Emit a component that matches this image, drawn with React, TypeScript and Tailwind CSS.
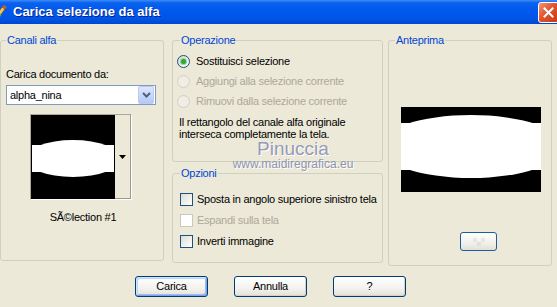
import type { ReactNode } from 'react';

const groupCls = 'border border-[#D0D0BF] rounded-[3px] min-w-0';
const legendCls = 'px-[1px] text-[#0046D5] leading-[13px]';

function Radio({ label, checked, disabled }: { label: string; checked?: boolean; disabled?: boolean }) {
    return (
        <div className="flex items-center h-[20px] gap-[6px]">
            <span
                className={
                    disabled
                        ? 'w-[13px] h-[13px] rounded-full border border-[#D2D0C4] bg-[#F0EEE4]'
                        : 'w-[13px] h-[13px] rounded-full border border-[#1C5180] bg-[linear-gradient(135deg,#D6D4CC,#FFFFFF)] flex items-center justify-center'
                }
            >
                {checked && <span className="w-[5px] h-[5px] rounded-full bg-[#2FA83A] shadow-[0_0_0_1px_#8CD88F]" />}
            </span>
            <span className={disabled ? 'text-[#ACA899]' : 'text-black'}>{label}</span>
        </div>
    );
}

function Check({ label, disabled }: { label: string; disabled?: boolean }) {
    return (
        <div className="flex items-center h-[21px] gap-[4px]">
            <span
                className={
                    disabled
                        ? 'w-[13px] h-[13px] border border-[#CAC8BB] bg-white'
                        : 'w-[13px] h-[13px] border border-[#1C5180] bg-[linear-gradient(135deg,#DCDCD7,#FFFFFF)]'
                }
            />
            <span className={disabled ? 'text-[#ACA899]' : 'text-black'}>{label}</span>
        </div>
    );
}

function XpButton({ children, isDefault }: { children: ReactNode; isDefault?: boolean }) {
    return (
        <button
            className={
                'w-[73px] h-[21px] rounded-[3px] border border-[#003C74] bg-[linear-gradient(to_bottom,#FFFFFF,#F3F2EE_60%,#E3E0D6)] text-black leading-none ' +
                (isDefault
                    ? 'shadow-[inset_1px_1px_0_#CEE7FF,inset_-1px_-1px_0_#7FA3E6,inset_2px_2px_0_#BCD4F6,inset_-2px_-2px_0_#9DBBF0]'
                    : 'shadow-[inset_-1px_-1px_0_#D6D0C5]')
            }
        >
            {children}
        </button>
    );
}

export default function App() {
    return (
        <div className="relative w-[557px] h-[307px] overflow-hidden bg-[#ECE9D8] font-['Liberation_Sans',Arial,sans-serif] text-[11px] tracking-[-0.25px] text-black">
            {/* title bar */}
            <div className="h-[24px] flex items-center bg-[linear-gradient(to_bottom,#3D8DF9_0%,#0A62EE_12%,#0058EE_45%,#0055E6_80%,#0045CC_100%)]">
                <svg width="16" height="16" viewBox="0 0 16 16" className="-ml-[7px]">
                    <path d="M2 13 L9 3 L12 5 L5 15 Z" fill="#E8C46A" stroke="#7A4A12" strokeWidth="0.8" />
                    <path d="M9 3 L11 1 L14 3 L12 5 Z" fill="#D05A2A" />
                    <circle cx="6" cy="11" r="2" fill="#4CAF50" />
                    <circle cx="4" cy="6" r="1.6" fill="#F4F4F4" />
                </svg>
                <span className="ml-[4px] text-white font-bold text-[13px] tracking-normal [text-shadow:1px_1px_0_#0A1E8C]">
                    Carica selezione da alfa
                </span>
                <div className="ml-auto mt-[1px] -mr-[2px] w-[21px] h-[21px] rounded-[3px] border border-white bg-[linear-gradient(135deg,#F0967A,#E2552E_45%,#C8380F)] flex items-center justify-center">
                    <svg width="11" height="11" viewBox="0 0 11 11">
                        <path d="M1.5 1.5 L9.5 9.5 M9.5 1.5 L1.5 9.5" stroke="white" strokeWidth="2" strokeLinecap="square" />
                    </svg>
                </div>
            </div>

            <div className="pt-[10px]">
                <div className="flex items-start h-[232px]">
                    {/* Canali alfa */}
                    <fieldset className={groupCls + ' w-[164px] h-[227px]'}>
                        <legend className={legendCls + ' ml-[5px]'}>Canali alfa</legend>
                        <div className="px-[5px] pt-[21px]">
                            <div className="leading-[13px]">Carica documento da:</div>
                            <div className="mt-[4px] w-[150px] h-[20px] border border-[#7F9DB9] bg-white flex items-center">
                                <span className="pl-[3px] flex-1">alpha_nina</span>
                                <span className="w-[16px] h-[18px] mr-[1px] rounded-[2px] border border-[#B9CBF3] bg-[linear-gradient(to_bottom,#DCE6FD,#B6C9F5)] flex items-center justify-center">
                                    <svg width="9" height="6" viewBox="0 0 9 6">
                                        <path d="M1 1 L4.5 4.5 L8 1" stroke="#4D6185" strokeWidth="2" fill="none" />
                                    </svg>
                                </span>
                            </div>
                            <div className="mt-[9px] ml-[24px] w-[102px] h-[86px] flex border border-t-[#ACA899] border-l-[#ACA899] border-r-white border-b-white">
                                <div className="border border-black">
                                    <svg width="82" height="82" viewBox="0 0 82 82" className="block">
                                        <rect width="82" height="82" fill="#000" />
                                        <rect y="29" width="82" height="27" fill="#fff" />
                                        <ellipse cx="41" cy="42.5" rx="48" ry="18.5" fill="#fff" />
                                    </svg>
                                </div>
                                <div className="flex-1 border-r border-b border-[#9C9A8C] bg-[#ECE9D8] flex items-center justify-center">
                                    <svg width="7" height="4" viewBox="0 0 7 4">
                                        <path d="M0 0 H7 L3.5 4 Z" fill="#000" />
                                    </svg>
                                </div>
                            </div>
                            <div className="mt-[11px] text-center leading-[13px] pl-[2px]">SÃ©lection #1</div>
                        </div>
                    </fieldset>

                    {/* middle column */}
                    <div className="ml-[8px] w-[211px] flex flex-col">
                        <fieldset className={groupCls + ' h-[128px]'}>
                            <legend className={legendCls + ' ml-[7px]'}>Operazione</legend>
                            <div className="pl-[4px] pt-[4px]">
                                <Radio label="Sostituisci selezione" checked />
                                <Radio label="Aggiungi alla selezione corrente" disabled />
                                <Radio label="Rimuovi dalla selezione corrente" disabled />
                                <p className="mt-[5px] ml-[2px] leading-[12px]">
                                    Il rettangolo del canale alfa originale
                                    <br />
                                    interseca completamente la tela.
                                </p>
                            </div>
                        </fieldset>
                        <fieldset className={groupCls + ' mt-[5px] h-[96px]'}>
                            <legend className={legendCls + ' ml-[7px]'}>Opzioni</legend>
                            <div className="pl-[7px] pt-[9px]">
                                <Check label="Sposta in angolo superiore sinistro tela" />
                                <Check label="Espandi sulla tela" disabled />
                                <Check label="Inverti immagine" />
                            </div>
                        </fieldset>
                    </div>

                    {/* Anteprima */}
                    <fieldset className={groupCls + ' ml-[5px] w-[164px] h-[232px]'}>
                        <legend className={legendCls + ' ml-[6px]'}>Anteprima</legend>
                        <div className="pl-[12px] pt-[60px]">
                            <svg width="140" height="85" viewBox="0 0 140 85" className="block">
                                <rect width="140" height="85" fill="#000" />
                                <rect y="16" width="140" height="47" fill="#fff" />
                                <ellipse cx="70" cy="39.5" rx="92" ry="31.5" fill="#fff" />
                            </svg>
                            <div className="mt-[40px] ml-[59px] w-[37px] h-[19px] rounded-[3px] border border-[#1D5D9B] bg-[linear-gradient(to_bottom,#FFFFFF,#EEEDE7_70%,#E2E0D6)] flex items-center justify-center">
                                <svg width="14" height="8" viewBox="0 0 14 8">
                                    <rect x="1" y="0" width="4" height="4" fill="#E6E6E6" />
                                    <rect x="9" y="0" width="4" height="4" fill="#E6E6E6" />
                                    <rect x="5" y="4" width="4" height="4" fill="#E0E0E0" />
                                </svg>
                            </div>
                        </div>
                    </fieldset>
                </div>

                {/* buttons */}
                <div className="mt-[10px] pl-[135px] flex gap-[26px]">
                    <XpButton isDefault>Carica</XpButton>
                    <XpButton>Annulla</XpButton>
                    <XpButton>?</XpButton>
                </div>
            </div>

            {/* watermark */}
            <div className="absolute left-[232px] top-[139px] w-[122px] text-center pointer-events-none">
                <div className="text-[19px] leading-[19px] text-[#959BB7] tracking-normal [text-shadow:1px_1px_0_#FFFFFF]">Pinuccia</div>
                <div className="text-[12px] leading-[12px] text-[#8E94AF] tracking-normal [text-shadow:1px_1px_0_#FFFFFF]">www.maidiregrafica.eu</div>
            </div>
        </div>
    );
}
